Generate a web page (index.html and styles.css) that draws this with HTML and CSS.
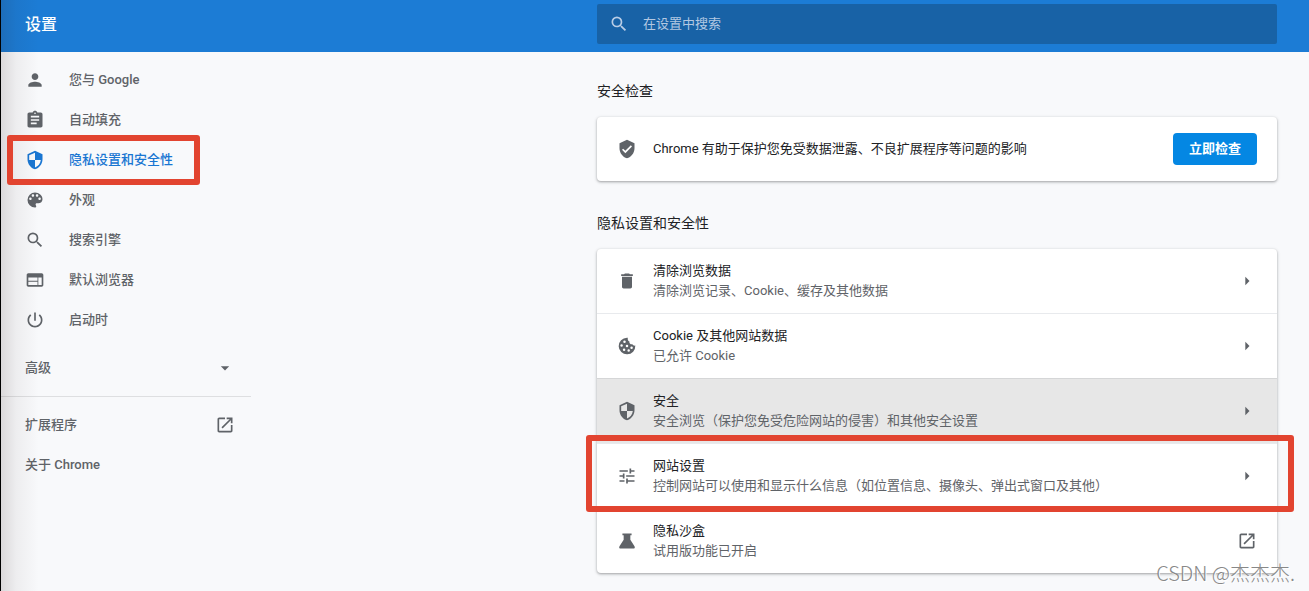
FILE: index.html
```html
<!DOCTYPE html>
<html lang="zh-CN">
<head>
<meta charset="utf-8">
<title>设置</title>
<link rel="stylesheet" href="styles.css">
</head>
<body>
<svg class="sprite" aria-hidden="true">
  <symbol id="search" viewBox="0 0 24 24"><path d="M15.5 14h-.79l-.28-.27A6.47 6.47 0 0 0 16 9.5 6.5 6.5 0 1 0 9.5 16c1.61 0 3.09-.59 4.23-1.57l.27.28v.79l5 4.99L20.49 19l-4.99-5zm-6 0C7.01 14 5 11.99 5 9.5S7.01 5 9.5 5 14 7.01 14 9.5 11.99 14 9.5 14z"/></symbol>
  <symbol id="person" viewBox="0 0 24 24"><path d="M12 12c2.21 0 4-1.79 4-4s-1.79-4-4-4-4 1.79-4 4 1.79 4 4 4zm0 2c-2.67 0-8 1.34-8 4v2h16v-2c0-2.66-5.33-4-8-4z"/></symbol>
  <symbol id="clipboard" viewBox="0 0 24 24"><path d="M19 3h-4.18C14.4 1.84 13.3 1 12 1s-2.4.84-2.82 2H5c-1.1 0-2 .9-2 2v14c0 1.1.9 2 2 2h14c1.1 0 2-.9 2-2V5c0-1.1-.9-2-2-2zm-7 0c.55 0 1 .45 1 1s-.45 1-1 1-1-.45-1-1 .45-1 1-1zm2 14H7v-2h7v2zm3-4H7v-2h10v2zm0-4H7V7h10v2z"/></symbol>
  <symbol id="shield" viewBox="0 0 24 24"><path d="M12 1L3 5v6c0 5.55 3.84 10.74 9 12 5.16-1.26 9-6.45 9-12V5l-9-4zm0 10.99h7c-.53 4.12-3.28 7.79-7 8.94V12H5V6.3l7-3.11v8.8z"/></symbol>
  <symbol id="verified" viewBox="0 0 24 24"><path d="M12 1L3 5v6c0 5.55 3.84 10.74 9 12 5.16-1.26 9-6.45 9-12V5l-9-4zm-2 16l-4-4 1.41-1.41L10 14.17l6.59-6.59L18 9l-8 8z"/></symbol>
  <symbol id="palette" viewBox="0 0 24 24"><path d="M12 3a9 9 0 0 0 0 18c.83 0 1.5-.67 1.5-1.5 0-.39-.15-.74-.39-1.01-.23-.26-.38-.61-.38-.99 0-.83.67-1.5 1.5-1.5H16c2.76 0 5-2.24 5-5 0-4.42-4.03-8-9-8zm-5.5 9c-.83 0-1.5-.67-1.5-1.5S5.67 9 6.5 9 8 9.67 8 10.5 7.33 12 6.5 12zm3-4C8.67 8 8 7.33 8 6.5S8.67 5 9.5 5s1.5.67 1.5 1.5S10.33 8 9.5 8zm5 0c-.83 0-1.5-.67-1.5-1.5S13.67 5 14.5 5s1.5.67 1.5 1.5S15.33 8 14.5 8zm3 4c-.83 0-1.5-.67-1.5-1.5S16.67 9 17.5 9s1.5.67 1.5 1.5-.67 1.5-1.5 1.5z"/></symbol>
  <symbol id="browser" viewBox="0 0 24 24"><path d="M20 4H4c-1.1 0-1.99.9-1.99 2L2 18c0 1.1.9 2 2 2h16c1.1 0 2-.9 2-2V6c0-1.1-.9-2-2-2zm-5 14H4v-4h11v4zm0-5H4V9h11v4zm5 5h-4V9h4v9z"/></symbol>
  <symbol id="power" viewBox="0 0 24 24"><path d="M13 3h-2v10h2V3zm4.83 2.17l-1.42 1.42C17.99 7.86 19 9.81 19 12c0 3.87-3.13 7-7 7s-7-3.13-7-7c0-2.19 1.01-4.14 2.58-5.42L6.17 5.17C4.23 6.82 3 9.26 3 12c0 4.97 4.03 9 9 9s9-4.03 9-9c0-2.74-1.23-5.18-3.17-6.83z"/></symbol>
  <symbol id="down" viewBox="0 0 24 24"><path d="M7 10l5 5 5-5z"/></symbol>
  <symbol id="right" viewBox="0 0 24 24"><path d="M10 7l5 5-5 5z"/></symbol>
  <symbol id="external" viewBox="0 0 24 24"><path d="M19 19H5V5h7V3H5c-1.11 0-2 .9-2 2v14c0 1.1.89 2 2 2h14c1.1 0 2-.9 2-2v-7h-2v7zM14 3v2h3.59l-9.83 9.83 1.41 1.41L19 6.41V10h2V3h-7z"/></symbol>
  <symbol id="trash" viewBox="0 0 24 24"><path d="M6 19c0 1.1.9 2 2 2h8c1.1 0 2-.9 2-2V7H6v12zM19 4h-3.5l-1-1h-5l-1 1H5v2h14V4z"/></symbol>
  <symbol id="cookie" viewBox="0 0 24 24"><path fill-rule="evenodd" d="M12 2a10 10 0 1 0 10 9.500c-1.500.3-2.900-.2-3.600-1.500-2.300.3-3.900-1.200-3.500-3.400C13.200 5.800 12.500 4 13 2zM9 5.500a1.500 1.500 0 1 1 0 3 1.500 1.500 0 0 1 0-3zM5.500 10a1.500 1.500 0 1 1 0 3 1.500 1.500 0 0 1 0-3zM12 10.500a1.500 1.500 0 1 1 0 3 1.500 1.500 0 0 1 0-3zM8.500 15a1.500 1.500 0 1 1 0 3 1.500 1.500 0 0 1 0-3zM14 16a1.500 1.500 0 1 1 0 3 1.500 1.500 0 0 1 0-3zM17.500 12.500a1.500 1.500 0 1 1 0 3 1.500 1.500 0 0 1 0-3z"/></symbol>
  <symbol id="tune" viewBox="0 0 24 24"><path d="M3 17v2h6v-2H3zM3 5v2h10V5H3zm10 16v-2h8v-2h-8v-2h-2v6h2zM7 9v2H3v2h4v2h2V9H7zm14 4v-2H11v2h10zm-6-4h2V7h4V5h-4V3h-2v6z"/></symbol>
  <symbol id="flask" viewBox="0 0 24 24"><path d="M6.500 3h11v2H16v5.500l5 7.700c.9 1.500.2 2.800-1.500 2.800h-15c-1.700 0-2.400-1.300-1.500-2.800l5-7.700V5H6.500z"/></symbol>
</svg>

<header class="topbar">
  <h1 class="topbar-title">设置</h1>
  <label class="search">
    <svg class="icon"><use href="#search"/></svg>
    <input class="search-input" type="search" placeholder="在设置中搜索" aria-label="在设置中搜索">
  </label>
</header>

<div class="layout">
  <nav class="sidebar">
    <a class="nav-item" href="#people"><svg class="icon"><use href="#person"/></svg>您与 Google</a>
    <a class="nav-item" href="#autofill"><svg class="icon"><use href="#clipboard"/></svg>自动填充</a>
    <a class="nav-item nav-item-active marked" href="#privacy"><svg class="icon"><use href="#shield"/></svg>隐私设置和安全性</a>
    <a class="nav-item" href="#appearance"><svg class="icon"><use href="#palette"/></svg>外观</a>
    <a class="nav-item" href="#engine"><svg class="icon"><use href="#search"/></svg>搜索引擎</a>
    <a class="nav-item" href="#default"><svg class="icon"><use href="#browser"/></svg>默认浏览器</a>
    <a class="nav-item" href="#startup"><svg class="icon"><use href="#power"/></svg>启动时</a>
    <button class="nav-item nav-toggle" type="button">高级<svg class="icon"><use href="#down"/></svg></button>
    <hr class="divider">
    <a class="nav-item nav-link" href="#extensions">扩展程序<svg class="icon"><use href="#external"/></svg></a>
    <a class="nav-item nav-link" href="#about">关于 Chrome</a>
  </nav>

  <main class="content">
    <section class="section">
      <h2 class="section-title">安全检查</h2>
      <div class="card">
        <div class="row">
          <svg class="icon"><use href="#verified"/></svg>
          <span class="row-text">Chrome 有助于保护您免受数据泄露、不良扩展程序等问题的影响</span>
          <button class="action" type="button">立即检查</button>
        </div>
      </div>
    </section>
    <section class="section">
      <h2 class="section-title">隐私设置和安全性</h2>
      <div class="card">
        <a class="row" href="#clear"><svg class="icon"><use href="#trash"/></svg><span class="row-text">清除浏览数据<span class="row-sub">清除浏览记录、Cookie、缓存及其他数据</span></span><svg class="icon"><use href="#right"/></svg></a>
        <a class="row" href="#cookies"><svg class="icon"><use href="#cookie"/></svg><span class="row-text">Cookie 及其他网站数据<span class="row-sub">已允许 Cookie</span></span><svg class="icon"><use href="#right"/></svg></a>
        <a class="row row-hover" href="#security"><svg class="icon"><use href="#shield"/></svg><span class="row-text">安全<span class="row-sub">安全浏览（保护您免受危险网站的侵害）和其他安全设置</span></span><svg class="icon"><use href="#right"/></svg></a>
        <a class="row marked marked-wide" href="#site"><svg class="icon"><use href="#tune"/></svg><span class="row-text">网站设置<span class="row-sub">控制网站可以使用和显示什么信息（如位置信息、摄像头、弹出式窗口及其他）</span></span><svg class="icon"><use href="#right"/></svg></a>
        <a class="row" href="#sandbox"><svg class="icon"><use href="#flask"/></svg><span class="row-text">隐私沙盒<span class="row-sub">试用版功能已开启</span></span><svg class="icon"><use href="#external"/></svg></a>
      </div>
    </section>
  </main>
</div>
<div class="watermark">CSDN @杰杰杰.</div>
</body>
</html>
```
FILE: styles.css
```css
* {
  box-sizing: border-box;
}

body {
  position: relative;
  min-height: 100vh;
  margin: 0;
  border-left: 1px solid #000;
  background: #f8f9fb;
  color: #202124;
  font: 13px/20px Roboto, "Noto Sans CJK SC", sans-serif;
}

/* soft shade along the left window edge */
body::after {
  content: "";
  position: absolute;
  inset: 0 auto 0 0;
  width: 38px;
  background: linear-gradient(to right, rgba(40, 20, 20, 0.14), rgba(40, 20, 20, 0.05) 40%, transparent);
  pointer-events: none;
}

a {
  color: inherit;
  text-decoration: none;
}

.sprite {
  display: none;
}

.icon {
  flex: none;
  width: 20px;
  height: 20px;
  fill: #5f6368;
}

.topbar {
  display: flex;
  align-items: center;
  justify-content: space-between;
  height: 52px;
  padding: 0 32px 4px 24px;
  background: #1c7cd5;
  color: #fff;
}

.topbar-title {
  margin: 0;
  font-size: 16px;
  font-weight: 500;
  line-height: 20px;
  padding-top: 2px;
}

.search {
  display: flex;
  flex: 0 1 680px;
  align-items: center;
  gap: 14px;
  height: 40px;
  padding: 0 12px;
  border-radius: 2px;
  background: #1862a6;
}

.search .icon {
  fill: #b9cde6;
}

.search-input {
  flex: 1;
  min-width: 0;
  padding: 0;
  border: 0;
  outline: 0;
  background: none;
  color: #fff;
  font: inherit;
}

.search-input::placeholder {
  color: #b3c8e2;
  opacity: 1;
}

.layout {
  display: flex;
  justify-content: space-between;
  padding-right: 32px;
}

.sidebar {
  flex: none;
  width: 250px;
  padding-top: 8px;
}

.nav-item {
  display: flex;
  align-items: center;
  gap: 24px;
  width: 100%;
  height: 40px;
  padding: 0 16px 0 24px;
  border: 0;
  background: none;
  color: #5f6368;
  font: inherit;
  font-weight: 500;
}

.nav-item-active {
  color: #1976d2;
}

.nav-item-active .icon {
  fill: #1976d2;
}

.nav-toggle,
.nav-link {
  justify-content: space-between;
}

.nav-toggle {
  margin: 8px 0;
}

.divider {
  height: 1px;
  margin: 0 0 8px;
  border: 0;
  background: #dedfe1;
}

.marked {
  position: relative;
}

.marked::after {
  content: "";
  position: absolute;
  inset: -5px 51px -5px 6px;
  z-index: 1;
  border: 6px solid #e24430;
  border-radius: 3px;
  pointer-events: none;
}

.marked-wide::after {
  inset: -9px -17px -4px -11px;
}

.content {
  flex: 0 1 680px;
  min-width: 0;
  padding-top: 29px;
}

.section + .section {
  margin-top: 32px;
}

.section-title {
  margin: 0 0 16px;
  font-size: 14px;
  font-weight: 400;
  line-height: 20px;
}

.card {
  border-radius: 4px;
  background: #fff;
  box-shadow: 0 1px 2px rgba(60, 64, 67, 0.3), 0 1px 3px 1px rgba(60, 64, 67, 0.15);
}

.row {
  display: flex;
  align-items: center;
  gap: 16px;
  min-height: 64px;
  padding: 0 20px;
}

.row + .row {
  min-height: 65px;
  border-top: 1px solid #e8eaed;
}

.row + .row-hover {
  border-top-color: #d5d6d7;
  background: #e7e7e7;
}

.row-text {
  flex: 1;
  min-width: 0;
}

.row-sub {
  display: block;
  color: #5f6368;
}

.action {
  height: 32px;
  padding: 0 16px;
  border: 0;
  border-radius: 4px;
  background: #0487e3;
  color: #fff;
  font: inherit;
  font-weight: 700;
}

.watermark {
  position: absolute;
  right: 14px;
  bottom: 6px;
  z-index: 2;
  color: #888;
  font: 300 20px/24px "Noto Sans CJK SC", sans-serif;
  text-shadow: 1px 1px 0 #fff;
}
```
